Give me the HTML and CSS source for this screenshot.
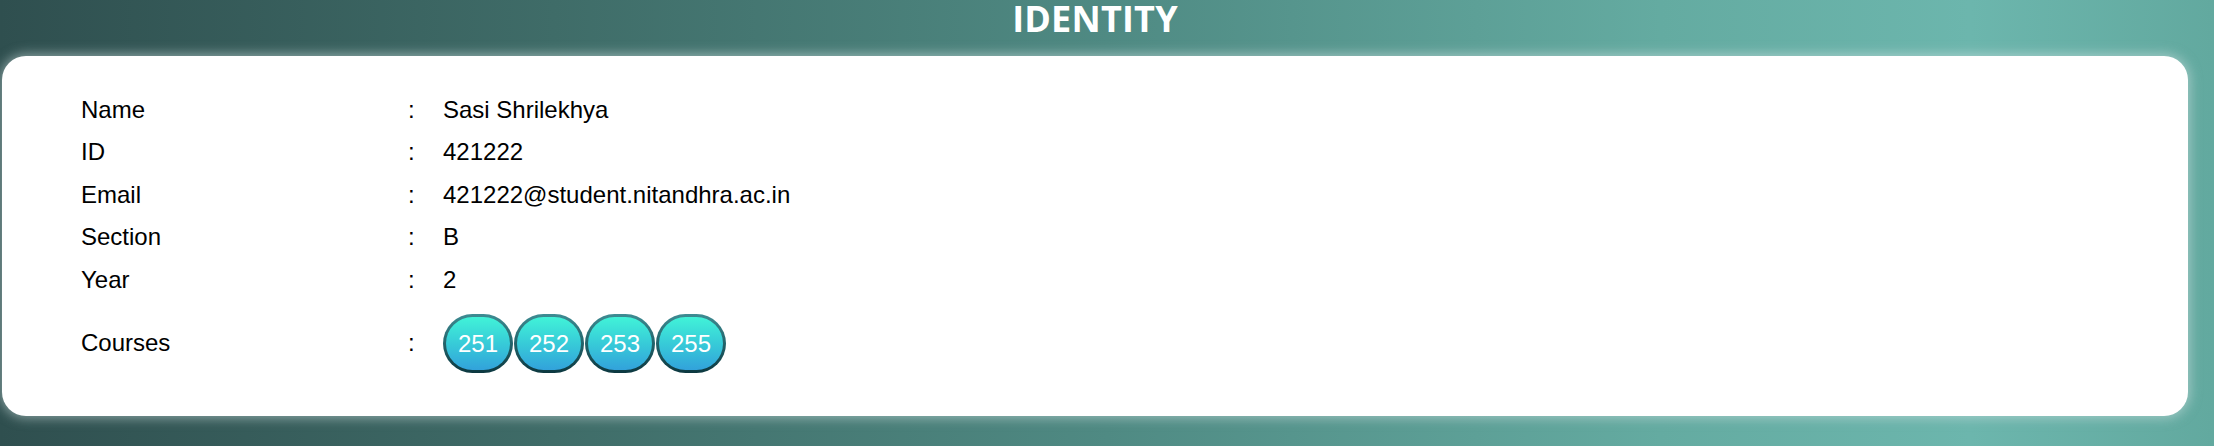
FILE: index.html
```html
<!DOCTYPE html>
<html lang="en">
<head>
<meta charset="utf-8">
<title>Identity</title>
<link rel="stylesheet" href="styles.css">
</head>
<body>
<div class="page">
  <h1 class="title">IDENTITY</h1>
  <section class="card">
    <div class="info">
      <div class="label">Name</div><div class="colon">:</div><div class="value">Sasi Shrilekhya</div>
      <div class="label">ID</div><div class="colon">:</div><div class="value">421222</div>
      <div class="label">Email</div><div class="colon">:</div><div class="value">421222@student.nitandhra.ac.in</div>
      <div class="label">Section</div><div class="colon">:</div><div class="value">B</div>
      <div class="label">Year</div><div class="colon">:</div><div class="value">2</div>
      <div class="label courses-row">Courses</div><div class="colon courses-row">:</div>
      <div class="value courses-row">
        <div class="courses">
          <span class="course">251</span>
          <span class="course">252</span>
          <span class="course">253</span>
          <span class="course">255</span>
        </div>
      </div>
    </div>
  </section>
</div>
</body>
</html>
```

FILE: styles.css
```css
html, body {
  margin: 0;
  padding: 0;
}

body {
  width: 2214px;
  height: 446px;
  overflow: hidden;
  background: linear-gradient(90deg, #2f4f4f 0%, #3f6c68 25%, #4f8a83 50%, #64aba1 75%, #6cb6ad 89%, #62a99f 100%);
  font-family: "Liberation Sans", Arial, sans-serif;
}

.page {
  width: 2190px;
  padding: 0 2px;
  box-sizing: border-box;
}

.title {
  margin: 0 0 16px;
  height: 40px;
  line-height: 38px;
  text-align: center;
  color: #ffffff;
  font-family: "Open Sans", "Noto Sans", sans-serif;
  font-weight: 700;
  font-size: 36px;
  letter-spacing: 0.2px;
}

.card {
  background: #ffffff;
  border-radius: 24px;
  height: 360px;
  box-sizing: border-box;
  padding: 32.5px 79px 29.5px 79px;
  box-shadow: 0 0 12px 2px rgba(210, 225, 225, 0.55);
}

.info {
  display: grid;
  grid-template-columns: 326px 36px auto;
  grid-auto-rows: 42.5px;
  font-size: 24px;
  line-height: 42.5px;
  color: #000000;
}

.colon {
  padding-left: 1px;
}

.courses-row {
  height: 85px;
  display: flex;
  align-items: center;
}

.info .courses-row {
  grid-row: span 2;
}

.courses {
  display: flex;
  gap: 1px;
}

.course {
  width: 70px;
  height: 59px;
  box-sizing: border-box;
  border: 3px solid transparent;
  border-radius: 30px;
  background:
    linear-gradient(180deg, #41f3d8 0%, #37cbd8 50%, #32a2db 100%) padding-box,
    linear-gradient(180deg, #3e8c93 0%, #23636a 50%, #0c3840 100%) border-box;
  color: #ffffff;
  font-size: 24px;
  line-height: 53px;
  text-align: center;
}
```
